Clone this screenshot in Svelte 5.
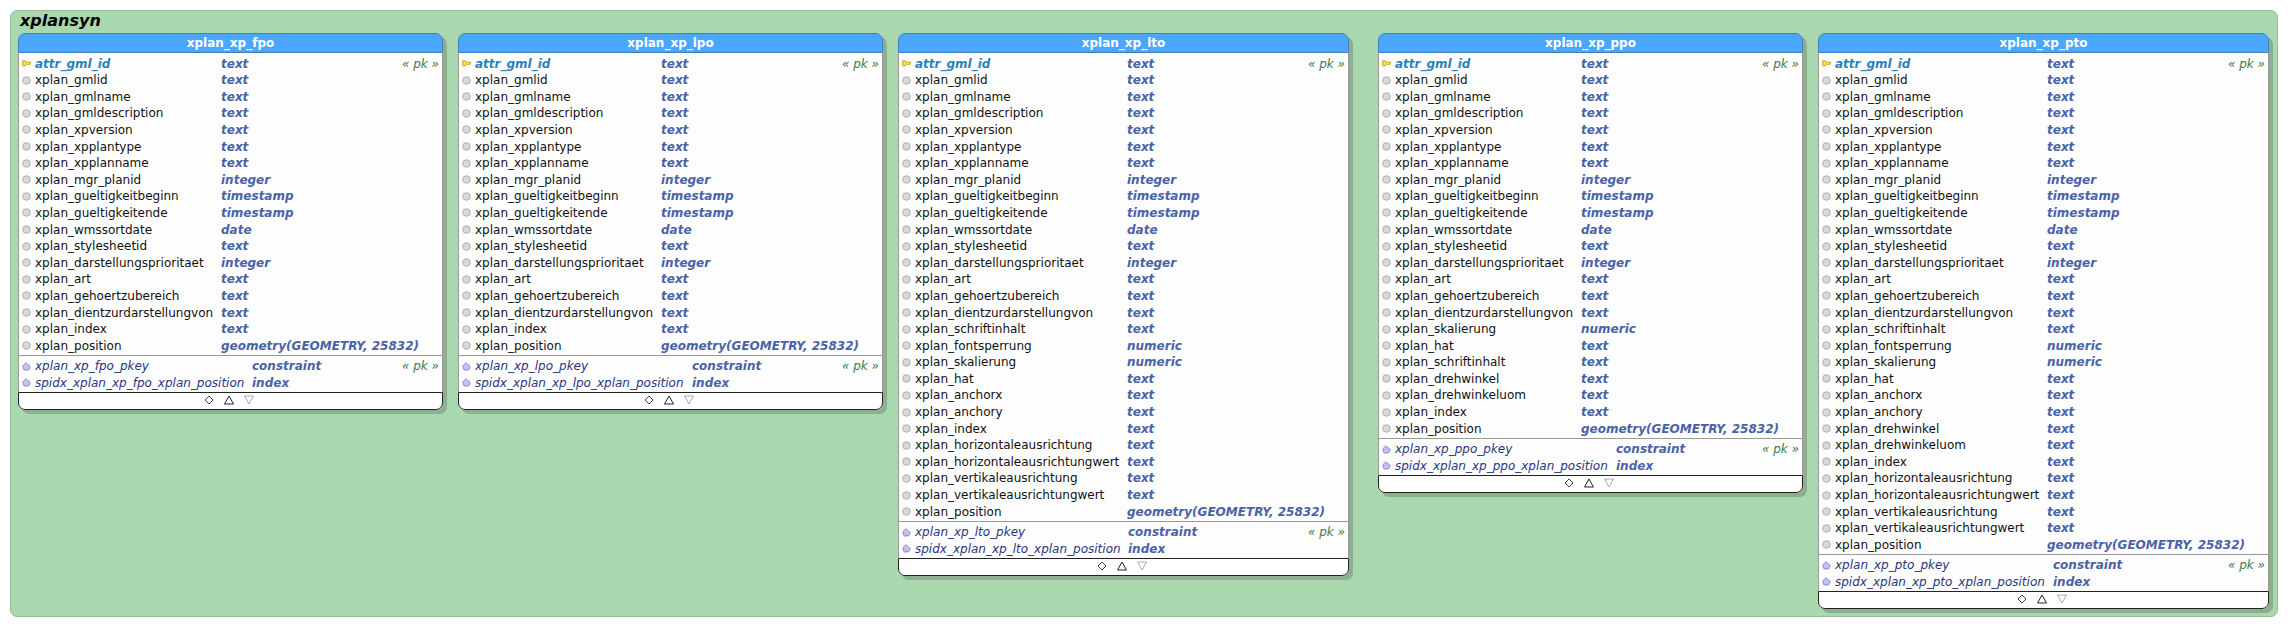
<script>
  const base = [
    ['xplan_gmlid', 'text'],
    ['xplan_gmlname', 'text'],
    ['xplan_gmldescription', 'text'],
    ['xplan_xpversion', 'text'],
    ['xplan_xpplantype', 'text'],
    ['xplan_xpplanname', 'text'],
    ['xplan_mgr_planid', 'integer'],
    ['xplan_gueltigkeitbeginn', 'timestamp'],
    ['xplan_gueltigkeitende', 'timestamp'],
    ['xplan_wmssortdate', 'date'],
    ['xplan_stylesheetid', 'text'],
    ['xplan_darstellungsprioritaet', 'integer'],
    ['xplan_art', 'text'],
    ['xplan_gehoertzubereich', 'text'],
    ['xplan_dientzurdarstellungvon', 'text']
  ];
  const geom = (t) => ['xplan_position', t + '(GEOMETRY, 25832)'];
  const text = (...names) => names.map((n) => ['xplan_' + n, 'text']);

  const tables = [
    { name: 'xplan_xp_fpo', left: 18, width: 425, col: 182, col2: 213, rows: [...base, ...text('index'), geom('geometry')] },
    { name: 'xplan_xp_lpo', left: 458, width: 425, col: 182, col2: 213, rows: [...base, ...text('index'), geom('geometry')] },
    {
      name: 'xplan_xp_lto', left: 898, width: 451, col: 208, col2: 209,
      rows: [...base, ['xplan_schriftinhalt', 'text'], ['xplan_fontsperrung', 'numeric'], ['xplan_skalierung', 'numeric'],
        ...text('hat', 'anchorx', 'anchory', 'index', 'horizontaleausrichtung', 'horizontaleausrichtungwert', 'vertikaleausrichtung', 'vertikaleausrichtungwert'), geom('geometry')]
    },
    {
      name: 'xplan_xp_ppo', left: 1378, width: 425, col: 182, col2: 217,
      rows: [...base, ['xplan_skalierung', 'numeric'], ...text('hat', 'schriftinhalt', 'drehwinkel', 'drehwinkeluom', 'index'), geom('geometry')]
    },
    {
      name: 'xplan_xp_pto', left: 1818, width: 451, col: 208, col2: 214,
      rows: [...base, ['xplan_schriftinhalt', 'text'], ['xplan_fontsperrung', 'numeric'], ['xplan_skalierung', 'numeric'],
        ...text('hat', 'anchorx', 'anchory', 'drehwinkel', 'drehwinkeluom', 'index', 'horizontaleausrichtung', 'horizontaleausrichtungwert', 'vertikaleausrichtung', 'vertikaleausrichtungwert'), geom('geometry')]
    }
  ];
</script>

<div class="page">
  <div class="group">
    <div class="title">xplansyn</div>
    {#each tables as t}
      <div class="entity" style="left: {t.left - 11}px; width: {t.width}px">
        <div class="head">{t.name}</div>
        <div class="cols" style="--col: {t.col}px">
          <div class="row">
            <svg class="ico" viewBox="0 0 10 10"><path d="M0.7 2 L3.5 2 L5 3.6 L9.5 3.6 L9.5 5.8 L8 5.8 L7.2 6.6 L6.4 5.8 L5 5.8 L3.5 7.6 L0.7 7.6 Z" fill="#f2e24e" stroke="#b09c18" stroke-width="0.9" stroke-linejoin="round" /></svg>
            <span class="pk-name">attr_gml_id</span>
            <span class="type">text</span>
            <span class="mark">« pk »</span>
          </div>
          {#each t.rows as r}
            <div class="row">
              <svg class="ico" viewBox="0 0 10 10"><circle cx="5" cy="5" r="4.2" fill="#d8d8d8" stroke="#a2a2a2" stroke-width="0.9" /></svg>
              <span>{r[0]}</span>
              <span class="type">{r[1]}</span>
            </div>
          {/each}
        </div>
        <div class="cols idx" style="--col: {t.col2}px">
          <div class="row">
            <svg class="ico" viewBox="0 0 10 10"><path d="M4.2 0.8 L9.2 5 L7.4 8.8 L2.2 8.8 L0.8 4.5 Z" fill="#c2c2f2" stroke="#7a7ad0" stroke-width="0.9" stroke-linejoin="round" /></svg>
            <span class="idx-name">{t.name}_pkey</span>
            <span class="type">constraint</span>
            <span class="mark">« pk »</span>
          </div>
          <div class="row">
            <svg class="ico" viewBox="0 0 10 10"><path d="M4.2 0.8 L9.2 5 L7.4 8.8 L2.2 8.8 L0.8 4.5 Z" fill="#c2c2f2" stroke="#7a7ad0" stroke-width="0.9" stroke-linejoin="round" /></svg>
            <span class="idx-name">spidx_{t.name}_xplan_position</span>
            <span class="type">index</span>
          </div>
        </div>
        <div class="foot">
          <svg viewBox="0 0 10 10"><path d="M5 1 L9 5 L5 9 L1 5 Z" fill="none" stroke="#444" /></svg>
          <svg viewBox="0 0 10 10"><path d="M5 1 L9.5 9 L0.5 9 Z" fill="none" stroke="#222" /></svg>
          <svg viewBox="0 0 10 10"><path d="M0.5 1 L9.5 1 L5 9 Z" fill="none" stroke="#aaa" /></svg>
        </div>
      </div>
    {/each}
  </div>
</div>

<style>
  :global(body) {
    margin: 0;
    background: #fff;
  }
  .page {
    height: 629px;
    padding: 10px 12px 12px 10px;
    box-sizing: border-box;
    font-family: "DejaVu Sans", sans-serif;
    font-size: 12px;
  }
  .group {
    position: relative;
    height: 100%;
    background: #a9d8ae;
    border: 1px solid #94bd98;
    border-radius: 7px;
    box-sizing: border-box;
  }
  .title {
    font-size: 16px;
    font-weight: bold;
    font-style: italic;
    color: #000;
    margin-left: 9px;
    line-height: 20px;
  }
  .entity {
    position: absolute;
    top: 22px;
    background: #fdfdfd;
    border-radius: 7px;
    box-shadow: 4px 4px 0 #8eae92;
  }
  .head {
    height: 20px;
    line-height: 18px;
    box-sizing: border-box;
    background: #4ba6fd;
    border: 1px solid #3f80b8;
    border-radius: 7px 7px 0 0;
    color: #fff;
    font-weight: bold;
    text-align: center;
  }
  .cols {
    padding: 2.3px 0 0.7px;
    border-left: 1px solid #9a9a9a;
    border-right: 1px solid #9a9a9a;
  }
  .idx {
    border-top: 1px solid #9a9a9a;
  }
  .row {
    display: grid;
    grid-template-columns: 9px var(--col) 1fr auto;
    column-gap: 4px;
    align-items: center;
    height: 16.6px;
    padding: 0 3px;
    color: #111;
    white-space: nowrap;
  }
  .ico {
    width: 9px;
    height: 9px;
  }
  .pk-name {
    font-weight: bold;
    font-style: italic;
    color: #2a82bc;
  }
  .type {
    font-weight: bold;
    font-style: italic;
    color: #4a62a8;
  }
  .mark {
    font-style: italic;
    color: #3c7a46;
  }
  .idx-name {
    font-style: italic;
    color: #28367e;
  }
  .foot {
    display: flex;
    justify-content: center;
    align-items: center;
    gap: 10px;
    height: 18px;
    padding: 0 3px 1px 0;
    background: #fff;
    border: 1px solid #222;
    border-radius: 0 0 7px 7px;
    box-sizing: border-box;
  }
  .foot svg {
    width: 10px;
    height: 10px;
  }
</style>
